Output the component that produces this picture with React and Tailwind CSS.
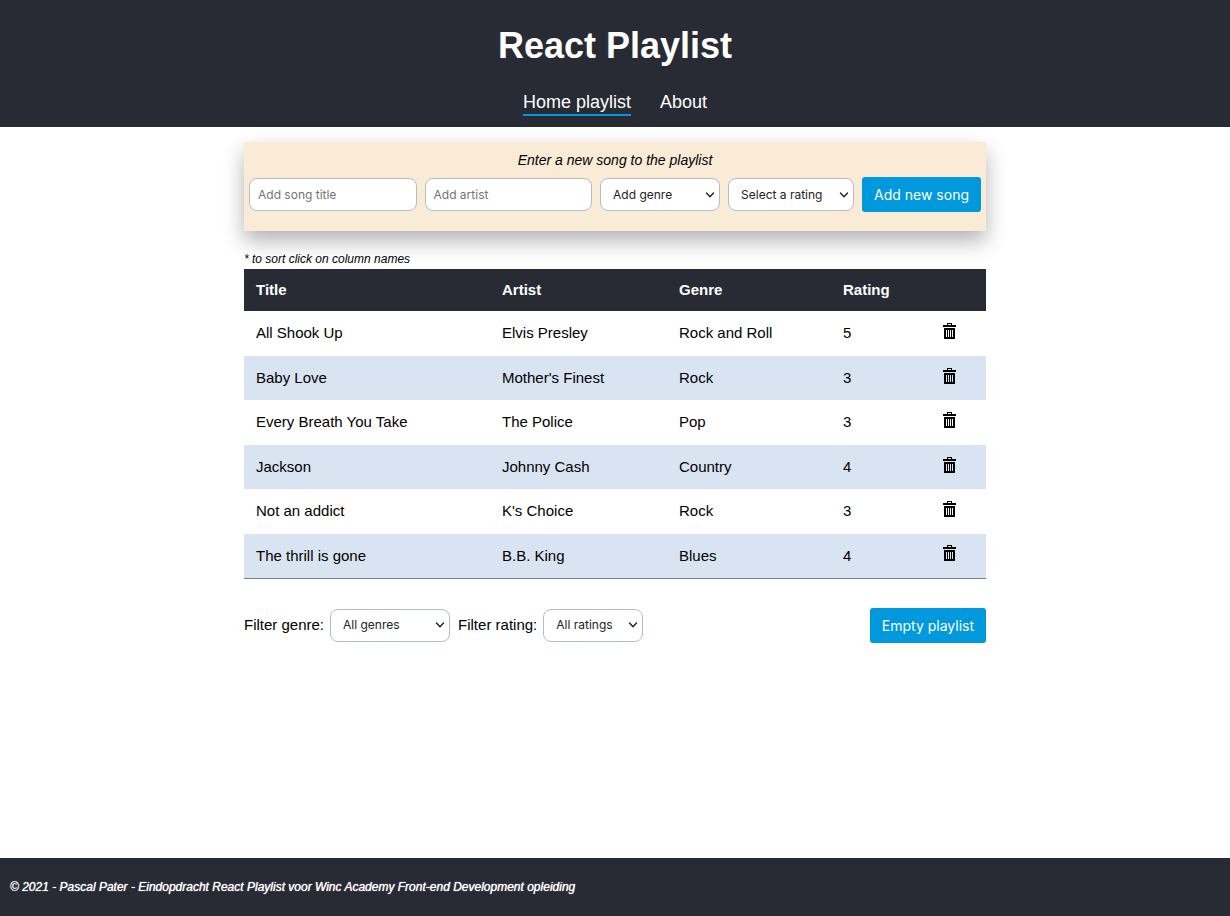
import React, { useState } from "react";

const SONGS = [
  { title: "All Shook Up", artist: "Elvis Presley", genre: "Rock and Roll", rating: 5 },
  { title: "Baby Love", artist: "Mother's Finest", genre: "Rock", rating: 3 },
  { title: "Every Breath You Take", artist: "The Police", genre: "Pop", rating: 3 },
  { title: "Jackson", artist: "Johnny Cash", genre: "Country", rating: 4 },
  { title: "Not an addict", artist: "K's Choice", genre: "Rock", rating: 3 },
  { title: "The thrill is gone", artist: "B.B. King", genre: "Blues", rating: 4 },
];

const GENRES = ["Blues", "Country", "Pop", "Rock", "Rock and Roll"];
const RATINGS = ["1", "2", "3", "4", "5"];

const COLUMNS = [
  { key: "title", label: "Title", width: "w-[246px]" },
  { key: "artist", label: "Artist", width: "w-[177px]" },
  { key: "genre", label: "Genre", width: "w-[164px]" },
  { key: "rating", label: "Rating", width: "w-[100px]" },
];

const FIELD =
  "h-[33px] rounded-lg border border-[#b0bec5] bg-white font-['Inter',sans-serif] text-[12px] text-[#222] placeholder:text-[#757575]";

function TrashIcon() {
  return (
    <svg width="13" height="16" viewBox="0 0 13 16" shapeRendering="crispEdges" aria-hidden="true">
      <path
        fillRule="evenodd"
        d="M4 0h5v2h4v2H0V2h4zM5 1v1h3V1zM1 5h11v11H1zM3 7v7h1V7zM5 7v7h1V7zM7 7v7h1V7zM9 7v7h1V7z"
      />
    </svg>
  );
}

function Select({ options, placeholder, className, ...rest }) {
  return (
    <span className={`relative inline-flex items-center ${className}`}>
      <select className={`${FIELD} w-full appearance-none pr-5 pl-3`} {...rest}>
        <option value="">{placeholder}</option>
        {options.map((o) => (
          <option key={o} value={o}>{o}</option>
        ))}
      </select>
      <svg
        width="10"
        height="6"
        viewBox="0 0 10 6"
        fill="none"
        stroke="#222"
        strokeWidth="1.4"
        strokeLinecap="round"
        strokeLinejoin="round"
        className="pointer-events-none absolute right-[5px]"
        aria-hidden="true"
      >
        <path d="M1.5 1 5 4.7 8.5 1" />
      </svg>
    </span>
  );
}

function Button({ children, ...rest }) {
  return (
    <button
      className="h-[35px] cursor-pointer whitespace-nowrap rounded-[3px] bg-[#0099dd] px-3 font-['Inter',sans-serif] text-[14px] text-white"
      {...rest}
    >
      {children}
    </button>
  );
}

export default function App() {
  const [songs, setSongs] = useState(SONGS);
  const [draft, setDraft] = useState({ title: "", artist: "", genre: "", rating: "" });
  const [genre, setGenre] = useState("");
  const [rating, setRating] = useState("");

  const edit = (key) => (e) => setDraft({ ...draft, [key]: e.target.value });
  const sortBy = (key) => setSongs([...songs].sort((a, b) => (a[key] > b[key] ? 1 : -1)));
  const addSong = (e) => {
    e.preventDefault();
    if (draft.title) setSongs([...songs, draft]);
  };
  const visible = songs.filter(
    (s) => (!genre || s.genre === genre) && (!rating || String(s.rating) === rating)
  );

  return (
    <div className="flex min-h-screen flex-col bg-white font-['Liberation_Sans',Arial,sans-serif] text-[15px] text-black">
      <header className="flex flex-col items-center bg-[#282b33] pt-[25px] pb-[11px] text-white">
        <h1 className="text-[36px] leading-[42px] font-bold">React Playlist</h1>
        <nav className="mt-[23px] flex gap-[29px] text-[18px] leading-6">
          <a href="#home" className="border-b-2 border-[#0099dd]">Home playlist</a>
          <a href="#about" className="border-b-2 border-transparent">About</a>
        </nav>
      </header>

      <main className="mx-auto w-full max-w-[742px] grow pt-[15px]">
        <form
          onSubmit={addSong}
          className="bg-[#faebd7] px-[5px] pt-2 pb-[19px] shadow-[0_10px_20px_rgba(0,0,0,0.3)]"
        >
          <p className="text-center text-[14px] leading-5 italic">Enter a new song to the playlist</p>
          <div className="mt-[7px] flex items-center gap-2">
            <input aria-label="Song title" placeholder="Add song title" value={draft.title} onChange={edit("title")} className={`${FIELD} w-0 grow px-2`} />
            <input aria-label="Artist" placeholder="Add artist" value={draft.artist} onChange={edit("artist")} className={`${FIELD} w-0 grow px-2`} />
            <Select aria-label="Genre" options={GENRES} placeholder="Add genre" value={draft.genre} onChange={edit("genre")} className="w-[120px]" />
            <Select aria-label="Rating" options={RATINGS} placeholder="Select a rating" value={draft.rating} onChange={edit("rating")} className="w-[126px]" />
            <Button type="submit">Add new song</Button>
          </div>
        </form>

        <p className="mt-[19px] pb-px text-[12px] leading-[18px] italic">* to sort click on column names</p>
        <table className="w-full table-fixed border-collapse border-b border-[#808080] text-left">
          <thead>
            <tr className="h-[42px] bg-[#282b33] text-white">
              {COLUMNS.map((c) => (
                <th key={c.key} scope="col" className={`${c.width} px-3`}>
                  <button type="button" onClick={() => sortBy(c.key)} className="cursor-pointer font-bold">
                    {c.label}
                  </button>
                </th>
              ))}
              <td />
            </tr>
          </thead>
          <tbody>
            {visible.map((s) => (
              <tr key={s.title} className="odd:h-[45px] even:h-[44px] even:bg-[#d9e4f2]">
                <td className="px-3">{s.title}</td>
                <td className="px-3">{s.artist}</td>
                <td className="px-3">{s.genre}</td>
                <td className="px-3">{s.rating}</td>
                <td className="px-3">
                  <button
                    type="button"
                    aria-label={`Delete ${s.title}`}
                    onClick={() => setSongs(songs.filter((x) => x !== s))}
                    className="block cursor-pointer pb-[5px]"
                  >
                    <TrashIcon />
                  </button>
                </td>
              </tr>
            ))}
          </tbody>
        </table>

        <div className="mt-[29px] flex items-center">
          <label htmlFor="filter-genre" className="mr-[6px]">Filter genre:</label>
          <Select id="filter-genre" options={GENRES} placeholder="All genres" value={genre} onChange={(e) => setGenre(e.target.value)} className="mr-2 w-[120px]" />
          <label htmlFor="filter-rating" className="mr-[6px]">Filter rating:</label>
          <Select id="filter-rating" options={RATINGS} placeholder="All ratings" value={rating} onChange={(e) => setRating(e.target.value)} className="mr-auto w-[100px]" />
          <Button type="button" onClick={() => setSongs([])}>Empty playlist</Button>
        </div>
      </main>

      <footer className="bg-[#282b33] px-[10px] py-5 text-[12px] leading-[18px] text-white italic [text-shadow:0_0_1px_white]">
        © 2021 - Pascal Pater - Eindopdracht React Playlist voor Winc Academy Front-end Development opleiding
      </footer>
    </div>
  );
}
